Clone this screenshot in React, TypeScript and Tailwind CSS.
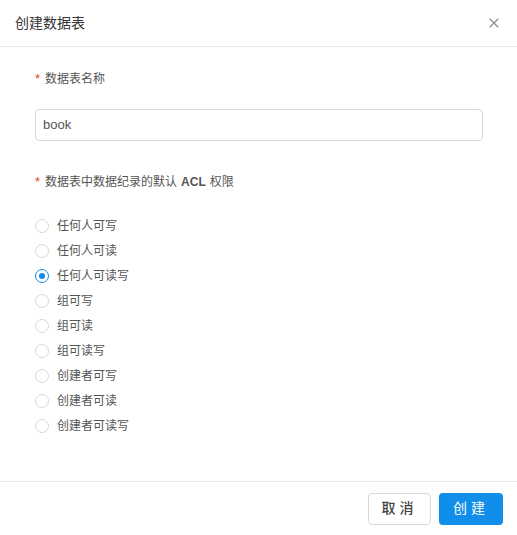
import { X } from "lucide-react";

const options = ["任何人可写", "任何人可读", "任何人可读写", "组可写", "组可读", "组可读写", "创建者可写", "创建者可读", "创建者可读写"];

function Label({ children }: { children: React.ReactNode }) {
  return (
    <div className="flex h-[20px] items-center text-[12px] text-[#555]">
      <span className="mr-[5px] text-[13px] text-[#f04134]">*</span>
      {children}
    </div>
  );
}

export default function App() {
  const selected = "任何人可读写";
  return (
    <div className="flex h-[535px] w-[517px] flex-col rounded-[4px] bg-white font-['Liberation_Sans','Noto_Sans_CJK_SC',sans-serif]">
      <div className="flex h-[47px] shrink-0 items-center justify-between border-b border-[#e9e9e9] pl-[15px] pr-[15px]">
        <span className="text-[14px] text-[#333]">创建数据表</span>
        <X className="h-[16px] w-[16px] text-[#888]" strokeWidth={1.6} />
      </div>
      <div className="flex-1 px-[35px] pt-[22px]">
        <Label>数据表名称</Label>
        <div className="mt-[20px] flex h-[32px] w-[448px] items-center rounded-[4px] border border-[#d9d9d9] px-[7px] text-[13px] text-[#555]">book</div>
        <div className="mt-[31px]">
          <Label>数据表中数据纪录的默认 <b className="mx-[4px] font-bold">ACL</b> 权限</Label>
        </div>
        <div className="mt-[24px] flex flex-col gap-[5px]">
          {options.map((o) => (
            <label key={o} className="flex h-[20px] items-center gap-[8px] text-[12px] text-[#555]">
              {o === selected ? (
                <span className="flex h-[14px] w-[14px] items-center justify-center rounded-full border border-[#108ee9]">
                  <span className="h-[6px] w-[6px] rounded-full bg-[#108ee9]" />
                </span>
              ) : (
                <span className="h-[14px] w-[14px] rounded-full border border-[#d9d9d9]" />
              )}
              {o}
            </label>
          ))}
        </div>
      </div>
      <div className="flex h-[54px] shrink-0 items-center justify-end gap-[8px] border-t border-[#e9e9e9] pr-[14px]">
        <button className="h-[32px] w-[63px] rounded-[4px] border border-[#d9d9d9] bg-white text-[14px] font-medium tracking-[4px] text-[#444]">取消</button>
        <button className="h-[32px] w-[64px] rounded-[4px] bg-[#108ee9] text-[14px] tracking-[4px] text-white">创建</button>
      </div>
    </div>
  );
}
